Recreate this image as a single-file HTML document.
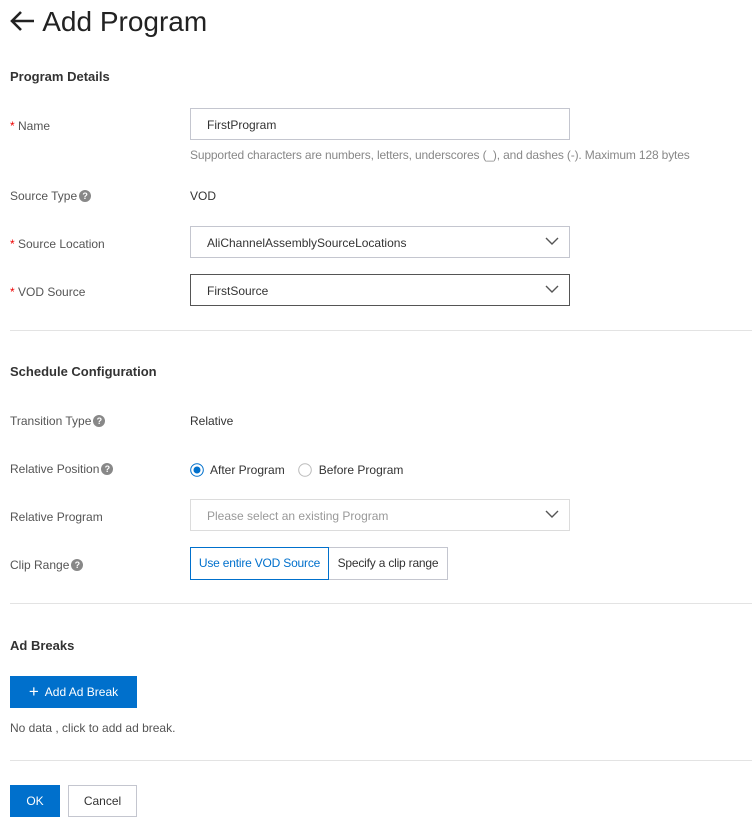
<!DOCTYPE html><html><head><style>
body{margin:0;background:#fff;font-family:"Liberation Sans",sans-serif;font-size:12px;color:#333;width:752px;height:836px;position:relative;overflow:hidden}
.a{position:absolute;white-space:nowrap}
.lab{color:#555}
.st{color:#e00}
.q{display:inline-block;width:12px;height:12px;border-radius:50%;background:#888;color:#fff;font-size:9px;line-height:12px;text-align:center;font-weight:bold;vertical-align:top;position:relative;top:1px;margin-left:2px}
.box{position:absolute;left:190px;width:378px;height:30px;border:1px solid #c4c6cf;background:#fff}
.box span{position:absolute;left:16px;top:9px}
.chev{position:absolute;right:10px;top:9px}
.h{font-weight:bold;font-size:13px;color:#333}
.hr{position:absolute;left:10px;right:0;height:1px;background:#e3e3e3}
</style></head><body>
<div class="a" style="left:8px;top:6px;font-size:28px;color:#222"><svg width="28" height="22" viewBox="0 0 28 22" style="vertical-align:-1px"><path d="M4 11H26M13 2L4 11L13 20" stroke="#222" stroke-width="2.6" fill="none"/></svg> Add Program</div>
<div class="a h" style="left:10px;top:69px">Program Details</div>
<div class="a lab" style="left:10px;top:119px"><span class="st">*</span> Name</div>
<div class="box" style="top:108px"><span>FirstProgram</span></div>
<div class="a" style="left:190px;top:148px;color:#888;letter-spacing:-0.15px">Supported characters are numbers, letters, underscores (_), and dashes (-). Maximum 128 bytes</div>
<div class="a lab" style="left:10px;top:189px">Source Type<span class="q">?</span></div>
<div class="a" style="left:190px;top:189px">VOD</div>
<div class="a lab" style="left:10px;top:237px"><span class="st">*</span> Source Location</div>
<div class="box" style="top:226px"><span>AliChannelAssemblySourceLocations</span><svg class="chev" width="14" height="10"><path d="M1 2L7 8L13 2" stroke="#555" stroke-width="1.4" fill="none"/></svg></div>
<div class="a lab" style="left:10px;top:285px"><span class="st">*</span> VOD Source</div>
<div class="box" style="top:274px;border-color:#555"><span>FirstSource</span><svg class="chev" width="14" height="10"><path d="M1 2L7 8L13 2" stroke="#555" stroke-width="1.4" fill="none"/></svg></div>
<div class="hr" style="top:330px"></div>
<div class="a h" style="left:10px;top:364px">Schedule Configuration</div>
<div class="a lab" style="left:10px;top:414px">Transition Type<span class="q">?</span></div>
<div class="a" style="left:190px;top:414px">Relative</div>
<div class="a lab" style="left:10px;top:462px">Relative Position<span class="q">?</span></div>
<div class="a" style="left:190px;top:463px"><svg width="14" height="14" style="vertical-align:-3px"><circle cx="7" cy="7" r="6.3" fill="#fff" stroke="#0070cc"/><circle cx="7" cy="7" r="3.5" fill="#0070cc"/></svg>&nbsp; After Program &nbsp;&nbsp;&nbsp;<svg width="14" height="14" style="vertical-align:-3px"><circle cx="7" cy="7" r="6.3" fill="#fff" stroke="#bbb"/></svg>&nbsp; Before Program</div>
<div class="a lab" style="left:10px;top:510px">Relative Program</div>
<div class="box" style="top:499px;border-color:#dcdcdc"><span style="color:#999">Please select an existing Program</span><svg class="chev" width="14" height="10"><path d="M1 2L7 8L13 2" stroke="#555" stroke-width="1.4" fill="none"/></svg></div>
<div class="a lab" style="left:10px;top:558px">Clip Range<span class="q">?</span></div>
<div class="a" style="left:190px;top:547px;width:137px;height:31px;border:1px solid #0070cc;color:#0070cc;line-height:31px;text-align:center;letter-spacing:-0.2px">Use entire VOD Source</div>
<div class="a" style="left:329px;top:547px;width:118px;height:31px;border:1px solid #c4c6cf;border-left:none;line-height:31px;text-align:center;letter-spacing:-0.2px">Specify a clip range</div>
<div class="hr" style="top:603px"></div>
<div class="a h" style="left:10px;top:638px">Ad Breaks</div>
<div class="a" style="left:10px;top:676px;width:127px;height:32px;background:#0070cc;color:#fff;line-height:32px;text-align:center"><span style="font-size:17px;vertical-align:-1px">+</span>&nbsp; Add Ad Break</div>
<div class="a lab" style="left:10px;top:721px">No data , click to add ad break.</div>
<div class="hr" style="top:760px"></div>
<div class="a" style="left:10px;top:785px;width:50px;height:32px;background:#0070cc;color:#fff;line-height:33px;text-align:center">OK</div>
<div class="a" style="left:68px;top:785px;width:67px;height:30px;border:1px solid #c4c6cf;line-height:31px;text-align:center">Cancel</div>
</body></html>
